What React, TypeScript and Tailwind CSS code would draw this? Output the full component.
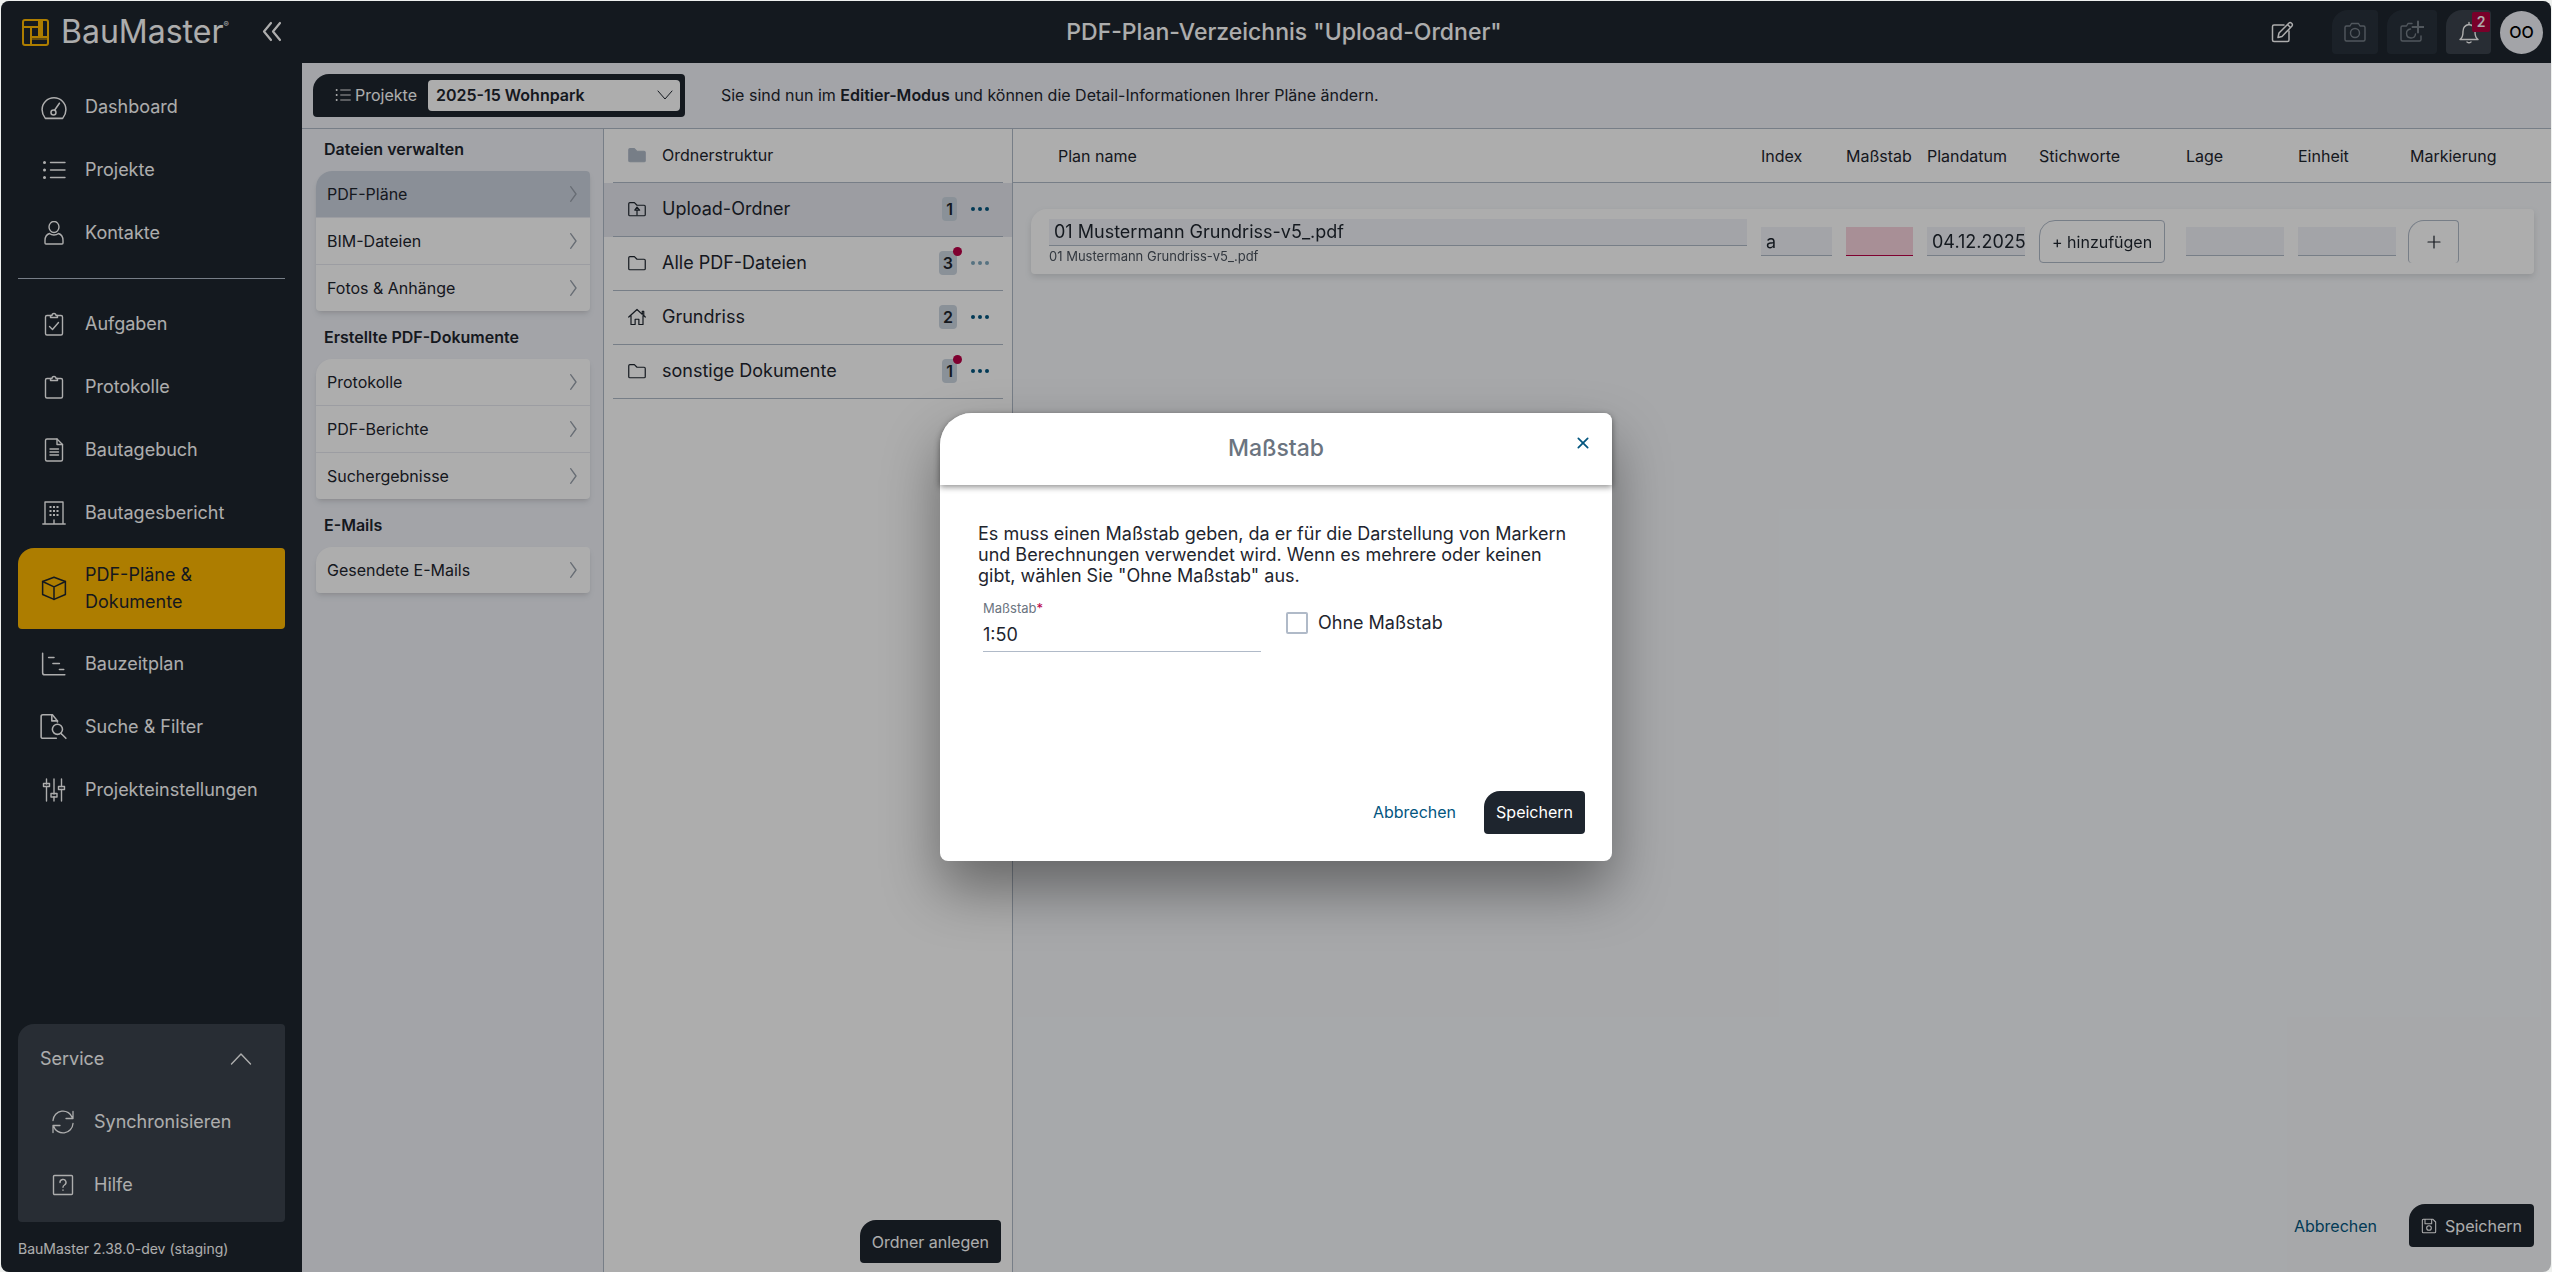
import { useState } from "react";
import type { ReactNode } from "react";

function Icon({ children, className = "size-6", width = 1.4 }: { children: ReactNode; className?: string; width?: number }) {
  return (
    <svg
      viewBox="0 0 24 24"
      className={`shrink-0 ${className}`}
      fill="none"
      stroke="currentColor"
      strokeWidth={width}
      strokeLinecap="round"
      strokeLinejoin="round"
      aria-hidden="true"
    >
      {children}
    </svg>
  );
}

const listPaths = (
  <>
    <path d="M8.5 4.5H23M8.5 12H23M8.5 19.5H23" />
    <path d="M2.5 4.5h.01M2.5 12h.01M2.5 19.5h.01" strokeWidth="3" />
  </>
);

const clipPaths = (
  <>
    <path d="M8.500 3.500H5A1.500 1.500 0 0 0 3.500 5v16.500A1.500 1.500 0 0 0 5 23h14a1.500 1.500 0 0 0 1.500-1.500V5A1.500 1.500 0 0 0 19 3.500h-3.500" />
    <path d="M8.500 3.500V5.500h7V3.500h-1.500a2 2 0 0 0-4 0Z" />
  </>
);

const navTop = [
  {
    label: "Dashboard",
    icon: (
      <Icon className="size-[26px]">
        <path d="M4 22.500C2 20 1 17.500 1 14.500a11 11 0 0 1 22 0c0 3-1 5.500-3 8Z" />
        <circle cx="11.500" cy="17" r="2.300" />
        <path d="M12.500 15 17 8.500" />
      </Icon>
    ),
  },
  { label: "Projekte", icon: <Icon className="size-6">{listPaths}</Icon> },
  {
    label: "Kontakte",
    icon: (
      <Icon className="size-6">
        <ellipse cx="12" cy="6" rx="5" ry="5.500" />
        <path d="M7.500 12.500C4.500 13.500 3 16 3 19.500V22a1 1 0 0 0 1 1h16a1 1 0 0 0 1-1v-2.500c0-3.500-1.500-6-4.500-7-2.500 2-6.500 2-9 0Z" />
      </Icon>
    ),
  },
];

const navMain = [
  {
    label: "Aufgaben",
    icon: (
      <Icon className="size-6">
        {clipPaths}
        <path d="m7.500 14.500 3 3 6-7" />
      </Icon>
    ),
  },
  { label: "Protokolle", icon: <Icon className="size-6">{clipPaths}</Icon> },
  {
    label: "Bautagebuch",
    icon: (
      <Icon className="size-6">
        <path d="M15 1H5a1.500 1.500 0 0 0-1.500 1.500v19A1.500 1.500 0 0 0 5 23h14a1.500 1.500 0 0 0 1.500-1.500V6.500Z" />
        <path d="M15 1v5.500h5.500M8 11h8.500M8 14h8.500M8 17h8.500" />
      </Icon>
    ),
  },
  {
    label: "Bautagesbericht",
    icon: (
      <Icon className="size-6">
        <path d="M0.800 23h22.400M3 23V1h18v22M12 23v-4" />
        <path
          d="M8.500 6h.01M12 6h.01M15.500 6h.01M8.500 10h.01M12 10h.01M15.500 10h.01M8.500 14h.01M12 14h.01M15.500 14h.01"
          strokeWidth="2"
          strokeLinecap="square"
        />
      </Icon>
    ),
  },
  {
    label: "PDF-Pläne & Dokumente",
    active: true,
    icon: (
      <Icon className="size-[26px]">
        <path d="M12 2 22.500 6v12L12 22.500 1.500 18V6Z" />
        <path d="M1.500 6 12 11 22.500 6M12 11v11.500" />
      </Icon>
    ),
  },
  {
    label: "Bauzeitplan",
    icon: (
      <Icon className="size-[26px]">
        <path d="M1.500 2v18a2 2 0 0 0 2 2H22M7 6h5M11 11.500h6M17 17h4" />
      </Icon>
    ),
  },
  {
    label: "Suche & Filter",
    icon: (
      <Icon className="size-[27px]">
        <path d="M14.500 22.500H2.500A1.500 1.500 0 0 1 1 21V3a1.500 1.500 0 0 1 1.500-1.500H11L15.500 7v1" />
        <path d="M10.500 1.500V7h5" />
        <circle cx="15.500" cy="14.500" r="4.500" />
        <path d="m19 18.500 4 4" />
      </Icon>
    ),
  },
  {
    label: "Projekteinstellungen",
    icon: (
      <Icon className="size-6">
        <path d="M4.500 1v5M4.500 8.500V23M12 1v15M12 18.500V23M19.500 1v7.500M19.500 11.500V23" />
        <path d="M1.500 5.500h6v3h-6ZM9 15.500h6v3.500H9ZM16.500 8.500h6v3h-6Z" />
      </Icon>
    ),
  },
];

const fileGroups = [
  { title: "Dateien verwalten", items: ["PDF-Pläne", "BIM-Dateien", "Fotos & Anhänge"] },
  { title: "Erstellte PDF-Dokumente", items: ["Protokolle", "PDF-Berichte", "Suchergebnisse"] },
  { title: "E-Mails", items: ["Gesendete E-Mails"] },
];

const folderPath = <path d="M1 18.500V5a1.500 1.500 0 0 1 1.500-1.500h6L12 7h9.500A1.500 1.500 0 0 1 23 8.500v11A1.500 1.500 0 0 1 21.500 21h-19A1.500 1.500 0 0 1 1 19.500Z" />;

const folders = [
  {
    name: "Upload-Ordner",
    count: 1,
    selected: true,
    icon: (
      <>
        {folderPath}
        <path d="M12 20v-7M9 13.500h6.500L12 9.500Z" />
      </>
    ),
  },
  { name: "Alle PDF-Dateien", count: 3, dot: true, muted: true, icon: folderPath },
  {
    name: "Grundriss",
    count: 2,
    icon: <path d="M1 12 12 2l7 6.500V4.500h2V10l2 2M4 10v12h5.500v-7h5v7H20V10" />,
  },
  { name: "sonstige Dokumente", count: 1, dot: true, icon: folderPath },
];

function NavItem({ label, icon, active }: { label: string; icon: ReactNode; active?: boolean }) {
  return (
    <a
      href="#"
      className={`flex items-center rounded-sm rounded-tl-2xl pl-[22px] pr-6 text-lg leading-[27px] ${
        active ? "mt-1 mb-[3px] bg-[#ffb800] pt-[13px] pb-[14px] text-[#1e252e]" : "py-[18px] text-white"
      }`}
    >
      <span className="mr-[18px] flex w-[27px] shrink-0 justify-center">{icon}</span>
      {label}
    </a>
  );
}

function Logo() {
  return (
    <svg viewBox="0 0 27 27" className="size-[27px] shrink-0" fill="none" stroke="#ffb800" strokeWidth="2" aria-hidden="true">
      <rect x="1" y="1" width="25" height="25" rx="2" />
      <path d="M1 8h16M9 8v18M17 1v16M20 1v17M9 18h17M20 8h-3" />
      <path d="M9 20h17M18.500 1v17" strokeWidth="1" />
    </svg>
  );
}

function Sidebar() {
  return (
    <aside className="flex w-[301px] shrink-0 flex-col bg-[#1e252e] px-[17px] text-white">
      <nav className="pt-3">
        {navTop.map((n) => (
          <NavItem key={n.label} {...n} />
        ))}
        <hr className="mt-[14px] mb-[13px] border-[#b0bac8]" />
        {navMain.map((n) => (
          <NavItem key={n.label} {...n} />
        ))}
      </nav>
      <section className="mt-auto rounded-sm rounded-tl-2xl bg-[#3b434d] pt-[3px] pb-[6px] text-lg leading-[27px]">
        <button className="flex w-full items-center justify-between py-[18px] pr-8 pl-[22px]">
          Service
          <Icon className="size-6">
            <path d="m2.500 17 9.500-10 9.500 10" />
          </Icon>
        </button>
        <a href="#" className="flex items-center py-[18px] pl-[33px]">
          <Icon className="mr-[19px] size-6" width={1.3}>
            <path d="M2 10.500A10 10 0 0 1 21.500 8M22 13.500A10 10 0 0 1 2.500 16M22 1.500V8.500h-7M2 22.500V15.500h7" />
          </Icon>
          Synchronisieren
        </a>
        <a href="#" className="flex items-center py-[18px] pl-[33px]">
          <Icon className="mr-[19px] size-6">
            <rect x="2.500" y="2.500" width="19" height="19" rx="1" />
            <path d="M9 9.500a3 3 0 1 1 4.500 2.500c-1 .6-1.500 1-1.500 2.200M12 17v.2" />
          </Icon>
          Hilfe
        </a>
      </section>
      <p className="pt-4 pb-[13px] text-sm leading-[21px]">BauMaster 2.38.0-dev (staging)</p>
    </aside>
  );
}

function TopBar() {
  return (
    <header className="flex h-[62px] shrink-0 items-center bg-[#1e252e] text-white">
      <div className="flex w-[301px] shrink-0 items-center pl-[21px]">
        <Logo />
        <span className="ml-3 flex text-[32px] leading-9">
          BauMaster<span className="pt-1 text-[8px] leading-3">®</span>
        </span>
        <button aria-label="Menü einklappen" className="mr-[18px] ml-auto">
          <Icon className="size-6" width={2.2}>
            <path d="m11 3-7 8.500 7 8.500M20 3l-7 8.500 7 8.500" />
          </Icon>
        </button>
      </div>
      <h1 className="flex-1 text-center text-[23px] leading-8 font-medium">PDF-Plan-Verzeichnis "Upload-Ordner"</h1>
      <div className="flex w-[285px] shrink-0 items-center justify-end gap-[9px] pr-2">
        <button aria-label="Bearbeiten" className="mr-auto ml-1">
          <Icon className="size-6" width={1.5}>
            <path d="M14 5H4a1.500 1.500 0 0 0-1.500 1.500V20A1.500 1.500 0 0 0 4 21.500h13.500A1.500 1.500 0 0 0 19 20v-9" />
            <path d="M8 17.500 9 13 19 3q1.200-1 2.600.3T22 6L12 16.500ZM17.500 4.500l3 3" />
          </Icon>
        </button>
        <button aria-label="Kamera" className="flex h-11 w-[46px] items-center justify-center rounded rounded-tl-2xl bg-[#29323c] text-[#78808a]">
          <Icon className="size-6">
            <path d="M2 7.500A1.500 1.500 0 0 1 3.500 6H7l1.500-2.500h7L17 6h3.500A1.500 1.500 0 0 1 22 7.500v12a1.500 1.500 0 0 1-1.500 1.500h-17A1.500 1.500 0 0 1 2 19.500Z" />
            <circle cx="12" cy="13" r="4.500" />
          </Icon>
        </button>
        <button aria-label="Foto hinzufügen" className="flex h-11 w-[50px] items-center justify-center rounded rounded-tl-2xl bg-[#29323c] text-[#78808a]">
          <Icon className="size-6">
            <path d="M12 3.500H8L6.500 6h-4A1.500 1.500 0 0 0 1 7.500v12A1.500 1.500 0 0 0 2.500 21h17a1.500 1.500 0 0 0 1.500-1.500V16" />
            <path d="M10.500 9a4.500 4.500 0 1 0 5 5" />
            <path d="M18 1.500v11M12.500 7h11" strokeWidth="2" />
          </Icon>
        </button>
        <button aria-label="Benachrichtigungen" className="relative flex h-11 w-[45px] items-center justify-center rounded rounded-tl-2xl bg-[#3b434d]">
          <Icon className="size-6">
            <path d="M4 18.500c1.500-1.500 2-3 2-7 0-4 2.500-6.500 6-7 3.500.5 6 3 6 7 0 4 .5 5.500 2 7l1 1H3ZM12 2.500v2M10 22q2 1.500 4 0" />
          </Icon>
          <span className="absolute top-[2px] right-px flex h-5 w-[18px] items-center justify-center rounded-xs bg-[#b3003e] text-sm font-semibold">2</span>
        </button>
        <button className="flex size-[43px] items-center justify-center rounded-full bg-[#f0f2f8] text-base font-medium text-black">OO</button>
      </div>
    </header>
  );
}

function Toolbar() {
  return (
    <div className="flex h-[66px] shrink-0 items-center border-b border-[#b0bac8] bg-[#f0f2f8] pb-px pl-[11px]">
      <div className="flex h-[43px] items-center rounded rounded-tl-2xl bg-[#1e252e] pr-[5px] pl-[22px] text-white">
        <Icon className="mr-1 size-4">{listPaths}</Icon>
        <label htmlFor="project" className="mr-[11px]">
          Projekte
        </label>
        <span className="relative flex items-center">
          <select id="project" className="h-[31px] w-[252px] appearance-none rounded bg-white pl-2 font-semibold text-[#1e252e]">
            <option>2025-15 Wohnpark</option>
          </select>
          <Icon className="pointer-events-none absolute right-[7px] size-4 text-[#1e252e]" width={1.5}>
            <path d="m1.500 6 10.500 12 10.500-12" />
          </Icon>
        </span>
      </div>
      <p className="ml-9">
        Sie sind nun im <b className="font-semibold">Editier-Modus</b> und können die Detail-Informationen Ihrer Pläne ändern.
      </p>
    </div>
  );
}

function FilePanel() {
  return (
    <div className="w-[302px] shrink-0 border-r border-[#b0bac8] bg-[#f0f2f8] pr-[13px] pl-[14px]">
      {fileGroups.map((g) => (
        <section key={g.title} className="pt-[14px] first:pt-2">
          <h2 className="mb-[10px] pl-2 leading-6 font-semibold">{g.title}</h2>
          <ul className="overflow-hidden rounded rounded-tl-2xl bg-white shadow-md">
            {g.items.map((item) => (
              <li key={item} className="border-t border-[#e6e8ef] first:border-t-0">
                <a
                  href="#"
                  className={`flex h-[46px] items-center justify-between pr-2 pl-[11px] ${item === "PDF-Pläne" ? "bg-[#ccd3df]" : ""}`}
                >
                  {item}
                  <Icon className="size-4 text-[#99a1ac]" width={2}>
                    <path d="m7 1 8 11-8 11" />
                  </Icon>
                </a>
              </li>
            ))}
          </ul>
        </section>
      ))}
    </div>
  );
}

function FolderPanel() {
  return (
    <div className="flex w-[409px] shrink-0 flex-col border-r border-[#b0bac8] bg-white">
      <div className="px-[9px]">
        <h2 className="flex h-[54px] items-center border-b border-[#b0bac8] pb-px pl-[15px]">
          <Icon className="mr-4 size-[18px] text-[#b0bac8]">
            <g fill="currentColor">{folderPath}</g>
          </Icon>
          Ordnerstruktur
        </h2>
      </div>
      <ul>
        {folders.map((f) => (
          <li key={f.name} className={`px-[9px] ${f.selected ? "bg-[#e6e8ef]" : ""}`}>
            <div className="flex h-[54px] items-center border-b border-[#b0bac8] pr-[13px] pb-px pl-[15px] text-lg">
              <Icon className="mr-4 size-[18px]" width={1.6}>
                {f.icon}
              </Icon>
              <a href="#" className="flex-1">
                {f.name}
              </a>
              <span className="relative rounded bg-[#ccd6e0] px-1 text-base leading-6 font-semibold">
                {f.count}
                {f.dot && <span className="absolute -top-1 -right-[5px] size-[9px] rounded-full bg-[#bb0047]" />}
              </span>
              <button aria-label={`${f.name} Optionen`} disabled={f.muted} className="ml-[13px] text-[#03567f] disabled:opacity-50">
                <svg viewBox="0 0 20 20" className="size-5" fill="currentColor" aria-hidden="true">
                  <circle cx="3" cy="10" r="2" />
                  <circle cx="10" cy="10" r="2" />
                  <circle cx="17" cy="10" r="2" />
                </svg>
              </button>
            </div>
          </li>
        ))}
      </ul>
      <button className="mt-auto mr-[11px] mb-[9px] h-[43px] self-end rounded rounded-tl-2xl bg-[#1e252e] px-3 text-white">
        Ordner anlegen
      </button>
    </div>
  );
}

const field = "block h-[29px] border-b border-[#b0bac8] bg-[#f0f2f8] pl-[5px] text-lg";

function PlanTable() {
  return (
    <div className="flex min-w-0 flex-1 flex-col bg-[#f6f8fb]">
      <table className="w-full table-fixed border-separate border-spacing-0">
        <colgroup>
          <col className="w-[18px]" />
          <col />
          <col className="w-[85px]" />
          <col className="w-[81px]" />
          <col className="w-[112px]" />
          <col className="w-[147px]" />
          <col className="w-[112px]" />
          <col className="w-[110px]" />
          <col className="w-[126px]" />
          <col className="w-[17px]" />
        </colgroup>
        <thead>
          <tr className="h-[54px] text-left *:border-b *:border-[#b0bac8] *:bg-white *:font-normal">
            <td />
            <th className="pl-[27px]">Plan name</th>
            <th>Index</th>
            <th>Maßstab</th>
            <th>Plandatum</th>
            <th>Stichworte</th>
            <th>Lage</th>
            <th>Einheit</th>
            <th className="pl-[2px]">Markierung</th>
            <td />
          </tr>
        </thead>
        <tbody>
          <tr className="h-[26px]">
            <td colSpan={10} />
          </tr>
          <tr className="drop-shadow-md">
            <td />
            <td className="rounded-l rounded-tl-2xl bg-white pt-[10px] pr-[14px] pb-2 pl-[18px]">
              <input
                aria-label="Plan name"
                defaultValue="01 Mustermann Grundriss-v5_.pdf"
                className="block h-[27px] w-full border-b border-[#b0bac8] bg-[#f0f2f8] pl-[5px] text-lg"
              />
              <p className="text-[13px] leading-5 text-[#4b535e]">01 Mustermann Grundriss-v5_.pdf</p>
            </td>
            <td className="bg-white">
              <input aria-label="Index" defaultValue="a" className={`${field} w-[71px]`} />
            </td>
            <td className="bg-white">
              <input aria-label="Maßstab" className="block h-[29px] w-[67px] border-b border-[#bb0047] bg-[#f8d3de] pl-[5px] text-lg" />
            </td>
            <td className="bg-white">
              <input aria-label="Plandatum" defaultValue="04.12.2025" className={`${field} w-[98px]`} />
            </td>
            <td className="bg-white">
              <button className="h-[43px] rounded rounded-tl-2xl border border-[#b0bac8] px-3">+ hinzufügen</button>
            </td>
            <td className="bg-white">
              <input aria-label="Lage" className={`${field} w-[98px]`} />
            </td>
            <td className="bg-white">
              <input aria-label="Einheit" className={`${field} w-[98px]`} />
            </td>
            <td className="rounded-r bg-white">
              <button
                aria-label="Markierung hinzufügen"
                className="flex h-[43px] w-[51px] items-center justify-center rounded rounded-tl-2xl border border-b-0 border-[#b0bac8]"
              >
                <Icon className="size-4" width={1.8}>
                  <path d="M12 3v18M3 12h18" />
                </Icon>
              </button>
            </td>
            <td />
          </tr>
        </tbody>
      </table>
      <div className="mt-auto mb-[25px] flex items-center justify-end gap-8 pr-[17px]">
        <button className="text-[#03567f]">Abbrechen</button>
        <button className="flex h-[43px] items-center rounded rounded-tl-2xl bg-[#1e252e] px-3 text-white">
          <Icon className="mr-2 size-4" width={1.6}>
            <path d="M2 3.500A1.500 1.500 0 0 1 3.500 2H18l4 4v14.500a1.500 1.500 0 0 1-1.500 1.500h-17A1.500 1.500 0 0 1 2 20.500ZM6 2v6.500h10V2" />
            <circle cx="12" cy="15" r="3.500" />
          </Icon>
          Speichern
        </button>
      </div>
    </div>
  );
}

function ScaleDialog() {
  const [scale, setScale] = useState("1:50");
  const [without, setWithout] = useState(false);

  return (
    <div className="absolute inset-0 flex items-center justify-center bg-black/32">
      <div
        role="dialog"
        aria-labelledby="scale-title"
        className="flex min-h-[448px] w-2xl flex-col rounded-lg rounded-tl-[32px] bg-white shadow-[0_28px_56px_rgba(0,0,0,0.4)]"
      >
        <div className="relative flex h-[72px] items-center justify-center rounded-tl-[32px] rounded-tr-lg bg-white shadow-[0_2px_6px_rgba(0,0,0,0.45)]">
          <h2 id="scale-title" className="text-[23px] font-medium text-[#6b7480]">
            Maßstab
          </h2>
          <button aria-label="Schließen" className="absolute top-[22px] right-[21px] text-[#03567f]">
            <Icon className="size-4" width={2.6}>
              <path d="m5 5 14 14M19 5 5 19" />
            </Icon>
          </button>
        </div>
        <div className="px-[38px] pt-[38px]">
          <p className="text-lg leading-[21px]">
            Es muss einen Maßstab geben, da er für die Darstellung von Markern und Berechnungen verwendet wird. Wenn es mehrere oder keinen gibt, wählen Sie "Ohne Maßstab" aus.
          </p>
          <div className="mt-[14px] flex gap-[25px] pl-[5px]">
            <div className="w-[278px]">
              <label htmlFor="scale" className="block text-[13px] leading-4 text-[#6b7480]">
                Maßstab<span className="text-[#bb0047]">*</span>
              </label>
              <input
                id="scale"
                value={scale}
                onChange={(e) => setScale(e.target.value)}
                className="mt-[2px] h-[34px] w-full border-b border-[#b0bac8] text-lg outline-none"
              />
            </div>
            <label className="mt-3 flex h-[22px] items-center gap-[10px] text-lg">
              <input
                type="checkbox"
                checked={without}
                onChange={(e) => setWithout(e.target.checked)}
                className="size-[22px] appearance-none rounded-xs border-2 border-[#b0bac8] checked:bg-[#03567f]"
              />
              Ohne Maßstab
            </label>
          </div>
        </div>
        <div className="mt-auto mb-[27px] flex items-center justify-end gap-7 pr-[27px]">
          <button className="text-[#03567f]">Abbrechen</button>
          <button className="h-[43px] rounded rounded-tl-2xl bg-[#1e252e] px-3 text-white">Speichern</button>
        </div>
      </div>
    </div>
  );
}

export default function App() {
  return (
    <div className="h-screen bg-[#eef0ee] pt-px pr-px pl-px font-['Inter',sans-serif] text-base text-[#1e252e]">
      <div className="relative flex h-full flex-col overflow-hidden rounded-lg">
        <TopBar />
        <div className="flex min-h-0 flex-1">
          <Sidebar />
          <main className="flex min-w-0 flex-1 flex-col">
            <Toolbar />
            <div className="flex min-h-0 flex-1">
              <FilePanel />
              <FolderPanel />
              <PlanTable />
            </div>
          </main>
        </div>
        <ScaleDialog />
      </div>
    </div>
  );
}
